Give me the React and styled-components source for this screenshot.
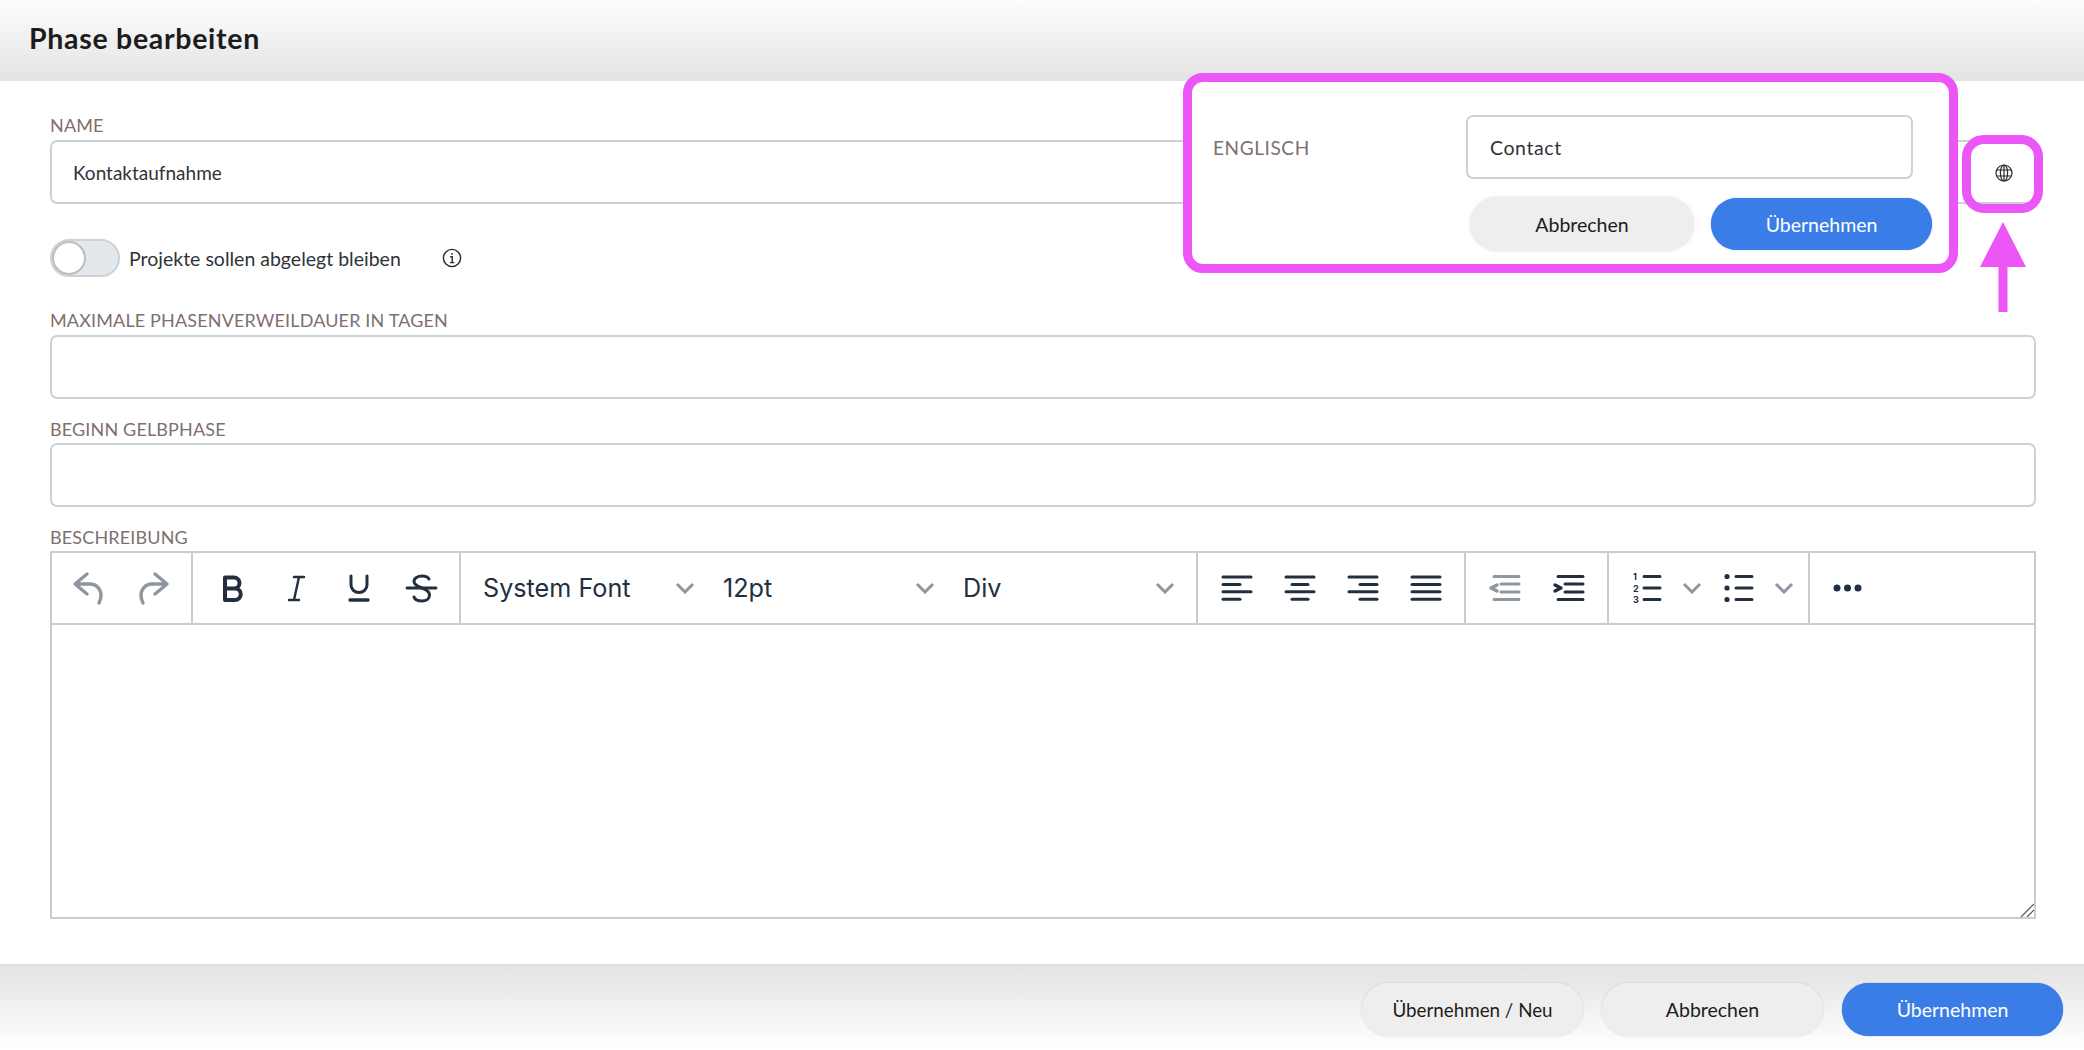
import React from "react";
import styled, { createGlobalStyle } from "styled-components";

const GlobalStyle = createGlobalStyle`
  html, body {
    margin: 0;
    padding: 0;
    background: #fff;
    font-family: "Lato", "Liberation Sans", sans-serif;
  }
  * {
    box-sizing: border-box;
  }
`;

const magenta = "#ec55f6";
const dark = "#222f3e";
const muted = "#8f969f";

const Page = styled.div`
  position: relative;
  width: 2084px;
  height: 1050px;
  display: flex;
  flex-direction: column;
  overflow: hidden;
`;

const Header = styled.header`
  height: 81px;
  padding: 0 29px 5px;
  display: flex;
  align-items: center;
  background: linear-gradient(to bottom, #fdfdfd, #e3e3e3);
`;

const Title = styled.h1`
  margin: 0;
  font-size: 28.5px;
  font-weight: 700;
  letter-spacing: 0.7px;
  color: #1c1c1e;
`;

const Main = styled.main`
  flex: 1;
  padding: 34px 48px 0 50px;
`;

const Field = styled.div`
  margin-top: ${(props) => props.$top || 0}px;
`;

const Label = styled.label`
  display: block;
  height: 20px;
  margin-bottom: ${(props) => props.$gap || 5}px;
  font-size: 18px;
  line-height: 20px;
  letter-spacing: 0.15px;
  color: #7e6f6f;
`;

const InputBox = styled.div`
  position: relative;
  height: 64px;
  padding: 0 21px;
  display: flex;
  align-items: center;
  border: 2px solid #cdd2d8;
  border-radius: 7px;
  background: #fff;
  font-size: 19px;
  color: #2f3338;
`;

const GlobeSlot = styled.span`
  position: absolute;
  right: 21px;
  top: 22px;
  width: 18px;
  height: 18px;
  display: flex;
`;

const ToggleRow = styled.div`
  margin-top: 35px;
  height: 38px;
  display: flex;
  align-items: center;
  font-size: 19.5px;
  color: #2f3338;
`;

const Toggle = styled.span`
  width: 70px;
  height: 38px;
  margin-right: 9px;
  display: flex;
  border: 2px solid #cdd2d8;
  border-radius: 19px;
  background: #e3e8ec;
`;

const Knob = styled.span`
  width: 34px;
  height: 34px;
  border: 2px solid #bdbdbd;
  border-radius: 50%;
  background: #fff;
`;

const InfoSlot = styled.span`
  margin-left: 41px;
  display: flex;
`;

const Editor = styled.div`
  height: 368px;
  display: flex;
  flex-direction: column;
  border: 2px solid #ccc;
  position: relative;
`;

const Toolbar = styled.div`
  height: 72px;
  display: flex;
  border-bottom: 2px solid #ccc;
`;

const Group = styled.div`
  width: ${(props) => props.$width}px;
  padding-left: ${(props) => props.$pad}px;
  display: flex;
  align-items: center;
  border-right: ${(props) => (props.$last ? "none" : "2px solid #ccc")};
`;

const Tool = styled.span`
  width: ${(props) => props.$width || 63}px;
  height: 36px;
  display: flex;
  align-items: center;
  justify-content: center;
  flex-shrink: 0;
`;

const FontSelect = styled.span`
  flex: 0 0 240px;
  padding-right: 28px;
  display: flex;
  align-items: center;
  justify-content: space-between;
  font-family: "Inter", "Liberation Sans", sans-serif;
  font-size: 25.2px;
  color: ${dark};
`;

const EditArea = styled.div`
  flex: 1;
`;

const ResizeGrip = styled.svg`
  position: absolute;
  right: 0;
  bottom: 0;
`;

const Footer = styled.footer`
  height: 86px;
  padding: 17px 21px 0 0;
  display: flex;
  justify-content: flex-end;
  gap: 19px;
  border-top: 2px solid #dfdfe2;
  background: linear-gradient(to bottom, #e3e3e5, #ffffff);
`;

const Button = styled.button`
  width: ${(props) => props.$width || 221}px;
  height: ${(props) => props.$height || 53}px;
  padding: 0;
  border: none;
  border-radius: 27px;
  font-family: "Lato", "Liberation Sans", sans-serif;
  font-size: ${(props) => props.$size || 19.5}px;
  color: ${(props) => (props.$primary ? "#fff" : "#1c1c1e")};
  background: ${(props) => (props.$primary ? "#3b7de6" : "#eeeeee")};
  box-shadow: ${(props) => (props.$primary ? "0 0 1px #1f6fe8" : "0 0 3px rgba(0, 0, 0, 0.12)")};
`;

/* annotation drawn on top of the form */
const Popup = styled.div`
  position: absolute;
  left: 1183px;
  top: 73px;
  width: 775px;
  height: 200px;
  padding: 33px 0 0 21px;
  border: 9px solid ${magenta};
  border-radius: 20px;
  background: #fff;
`;

const PopupRow = styled.div`
  display: flex;
  align-items: center;
`;

const PopupLabel = styled.span`
  width: 253px;
  font-size: 19px;
  letter-spacing: 0.6px;
  color: #7e6f6f;
`;

const PopupInput = styled(InputBox)`
  width: 447px;
  padding-left: 22px;
  font-size: 19.5px;
  letter-spacing: 0.6px;
`;

const PopupActions = styled.div`
  margin: 18px 0 0 257px;
  display: flex;
  align-items: center;
  gap: 17px;
`;

const GlobeMark = styled.div`
  position: absolute;
  left: 1962px;
  top: 135px;
  width: 81px;
  height: 78px;
  border: 9px solid ${magenta};
  border-radius: 22px;
`;

const Arrow = styled.svg`
  position: absolute;
  left: 1980px;
  top: 222px;
`;

const Icon = ({ color = dark, children }) => (
  <svg width="36" height="36" viewBox="0 0 36 36" fill="none" stroke={color} strokeWidth="3" strokeLinecap="round" strokeLinejoin="round">
    {children}
  </svg>
);

const Chevron = () => (
  <svg width="20" height="12" viewBox="0 0 20 12" fill="none" stroke={muted} strokeWidth="3">
    <path d="M2 2l8 8 8-8" />
  </svg>
);

const Globe = () => (
  <svg width="18" height="18" viewBox="0 0 18 18" fill="none" stroke="#26282b" strokeWidth="1.2">
    <circle cx="9" cy="9" r="8" />
    <ellipse cx="9" cy="9" rx="3.6" ry="8" />
    <path d="M9 1v16M1.8 6h14.4M1.8 12h14.4" />
  </svg>
);

const Info = () => (
  <svg width="20" height="20" viewBox="0 0 20 20" fill="none" stroke="#26282b" strokeWidth="1.4">
    <circle cx="10" cy="10" r="8.6" />
    <path d="M8.2 8.8H10.2V14.6M8 14.6h4.4" />
    <circle cx="10" cy="5.8" r="0.9" fill="#26282b" stroke="none" />
  </svg>
);

const lines = {
  left: [[4, 32], [4, 21], [4, 32], [4, 21]],
  center: [[4, 32], [10, 26], [4, 32], [10, 26]],
  right: [[4, 32], [15, 32], [4, 32], [15, 32]],
  justify: [[4, 32], [4, 32], [4, 32], [4, 32]],
};

const Align = ({ side }) => (
  <Icon>
    {lines[side].map(([a, b], i) => (
      <path key={i} d={`M${a} ${7 + i * 7.4}H${b}`} />
    ))}
  </Icon>
);

const Outdent = () => (
  <Icon color={muted}>
    <path d="M8 6.5H33M15 14H33M15 22H33M8 29.5H33" />
    <path d="M11 15l-6 3 6 3" strokeWidth="3.4" />
  </Icon>
);

const Indent = () => (
  <Icon>
    <path d="M8 6.5H33M15 14H33M15 22H33M8 29.5H33" />
    <path d="M5 15l6 3-6 3" strokeWidth="3.4" />
  </Icon>
);

const NumList = () => (
  <Icon>
    <path d="M16 6.5H32M16 18H32M16 29.5H32" />
    <g fontSize="9" fontFamily="Inter, sans-serif" fontWeight="700" fill={dark} stroke="none">
      <text x="5" y="10">1</text>
      <text x="5" y="21.5">2</text>
      <text x="5" y="33">3</text>
    </g>
  </Icon>
);

const BulList = () => (
  <Icon>
    <path d="M16 6.5H32M16 18H32M16 29.5H32" />
    <g fill={dark} stroke="none">
      <circle cx="7" cy="6.5" r="2.6" />
      <circle cx="7" cy="18" r="2.6" />
      <circle cx="7" cy="29.5" r="2.6" />
    </g>
  </Icon>
);

const App = () => (
  <Page>
    <GlobalStyle />
    <Header>
      <Title>Phase bearbeiten</Title>
    </Header>
    <Main>
      <Field>
        <Label>NAME</Label>
        <InputBox>
          Kontaktaufnahme
          <GlobeSlot>
            <Globe />
          </GlobeSlot>
        </InputBox>
      </Field>
      <ToggleRow>
        <Toggle>
          <Knob />
        </Toggle>
        Projekte sollen abgelegt bleiben
        <InfoSlot>
          <Info />
        </InfoSlot>
      </ToggleRow>
      <Field $top={33}>
        <Label>MAXIMALE PHASENVERWEILDAUER IN TAGEN</Label>
        <InputBox />
      </Field>
      <Field $top={20}>
        <Label $gap={4}>BEGINN GELBPHASE</Label>
        <InputBox />
      </Field>
      <Field $top={20}>
        <Label $gap={4}>BESCHREIBUNG</Label>
        <Editor>
          <Toolbar>
            <Group $width={141} $pad={3}>
              <Tool $width={66}>
                <Icon color={muted}>
                  <path d="M5 14H20C27 14 31 20 31 25C31 28 30 31 29 33M17 4L5 14L17 24" strokeWidth="3.4" />
                </Icon>
              </Tool>
              <Tool $width={66}>
                <Icon color={muted}>
                  <path d="M31 14H16C9 14 5 20 5 25C5 28 6 31 7 33M19 4L31 14L19 24" strokeWidth="3.4" />
                </Icon>
              </Tool>
            </Group>
            <Group $width={268} $pad={8}>
              <Tool>
                <Icon>
                  <path d="M10 7.5H19A5.5 5.5 0 0 1 19 18.5H10ZM10 18.5H20A5.75 5.75 0 0 1 20 30H10Z" strokeWidth="4" />
                </Icon>
              </Tool>
              <Tool>
                <Icon>
                  <path d="M16 7H26M11 30H21M21 7L16 30" strokeWidth="2.4" />
                </Icon>
              </Tool>
              <Tool>
                <Icon>
                  <path d="M10 6V15A8 7.5 0 0 0 26 15V6" strokeWidth="3" />
                  <path d="M9 30H27" strokeWidth="3.4" />
                </Icon>
              </Tool>
              <Tool>
                <Icon>
                  <path d="M3 18H32" strokeWidth="2.8" />
                  <path d="M25 9C24 7 21 6 18 6C14 6 10 8 10 11.5C10 15 14 16.5 18 18C22 19.5 25.5 21 25.5 25C25.5 29 22 31 18 31C14 31 11 30 10 27" strokeWidth="3" />
                </Icon>
              </Tool>
            </Group>
            <Group $width={737} $pad={22}>
              <FontSelect>
                System Font
                <Chevron />
              </FontSelect>
              <FontSelect>
                12pt
                <Chevron />
              </FontSelect>
              <FontSelect>
                Div
                <Chevron />
              </FontSelect>
            </Group>
            <Group $width={268} $pad={7}>
              <Tool><Align side="left" /></Tool>
              <Tool><Align side="center" /></Tool>
              <Tool><Align side="right" /></Tool>
              <Tool><Align side="justify" /></Tool>
            </Group>
            <Group $width={143} $pad={6}>
              <Tool $width={64}><Outdent /></Tool>
              <Tool $width={64}><Indent /></Tool>
            </Group>
            <Group $width={201} $pad={14}>
              <Tool $width={46}><NumList /></Tool>
              <Tool $width={46}><Chevron /></Tool>
              <Tool $width={46}><BulList /></Tool>
              <Tool $width={46}><Chevron /></Tool>
            </Group>
            <Group $width={80} $pad={5} $last>
              <Tool>
                <Icon>
                  <g fill={dark} stroke="none">
                    <circle cx="8" cy="18" r="3.5" />
                    <circle cx="18.5" cy="18" r="3.5" />
                    <circle cx="29" cy="18" r="3.5" />
                  </g>
                </Icon>
              </Tool>
            </Group>
          </Toolbar>
          <EditArea />
          <ResizeGrip width="14" height="14" viewBox="0 0 14 14" stroke="#555" strokeWidth="1.2">
            <path d="M1 14L14 1M7 14L14 7" />
          </ResizeGrip>
        </Editor>
      </Field>
    </Main>
    <Footer>
      <Button $size={18.8}>Übernehmen / Neu</Button>
      <Button>Abbrechen</Button>
      <Button $primary>Übernehmen</Button>
    </Footer>

    <Popup>
      <PopupRow>
        <PopupLabel>ENGLISCH</PopupLabel>
        <PopupInput>Contact</PopupInput>
      </PopupRow>
      <PopupActions>
        <Button $width={224} $height={54}>Abbrechen</Button>
        <Button $primary $height={52}>Übernehmen</Button>
      </PopupActions>
    </Popup>
    <GlobeMark />
    <Arrow width="46" height="90" viewBox="0 0 46 90" fill={magenta}>
      <path d="M23 0L46 45H27.5V90H18.5V45H0Z" />
    </Arrow>
  </Page>
);

export default App;
